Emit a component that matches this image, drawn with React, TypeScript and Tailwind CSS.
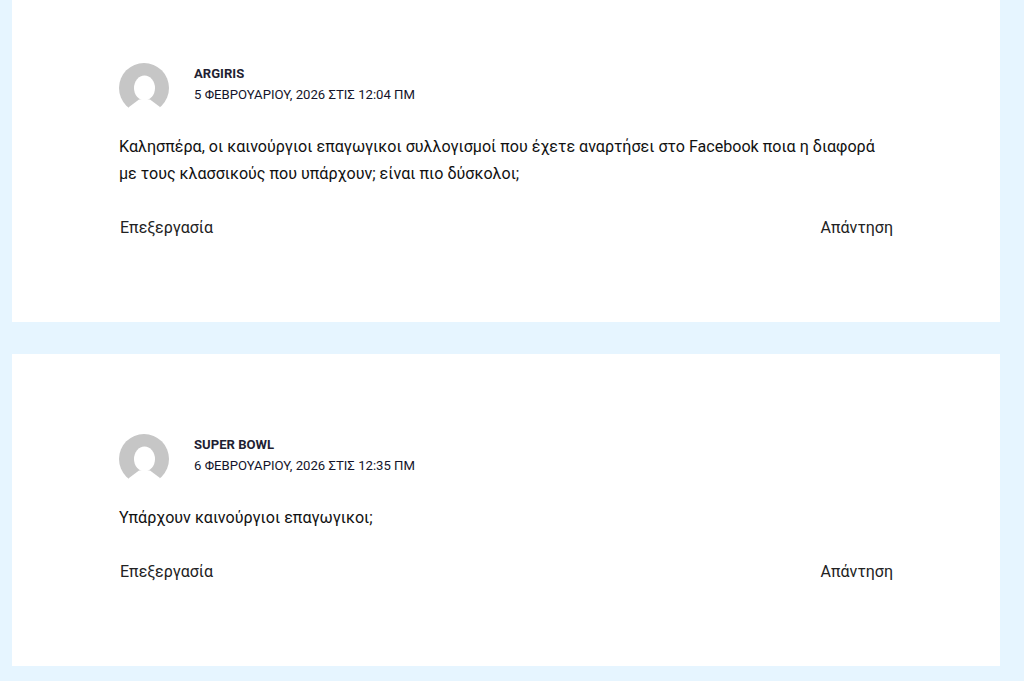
const comments = [
  {
    author: "ARGIRIS",
    date: "5 ΦΕΒΡΟΥΑΡΙΟΥ, 2026 ΣΤΙΣ 12:04 ΠΜ",
    lines: [
      "Καλησπέρα, οι καινούργιοι επαγωγικοι συλλογισμοί που έχετε αναρτήσει στο Facebook ποια η διαφορά",
      "με τους κλασσικούς που υπάρχουν; είναι πιο δύσκολοι;",
    ],
    height: "h-[322px]",
    top: "pt-[63px]",
  },
  {
    author: "SUPER BOWL",
    date: "6 ΦΕΒΡΟΥΑΡΙΟΥ, 2026 ΣΤΙΣ 12:35 ΠΜ",
    lines: ["Υπάρχουν καινούργιοι επαγωγικοι;"],
    height: "h-[312px]",
    top: "pt-[80px]",
  },
];

function Avatar() {
  return (
    <svg width="50" height="50" viewBox="0 0 50 50" className="shrink-0">
      <circle cx="25" cy="25" r="25" fill="#c6c6c6" />
      <ellipse cx="25.5" cy="25" rx="10.5" ry="12.5" fill="#fff" />
      <path d="M10 44 20 36.5h11L41 44l-2 6H8z" fill="#fff" />
    </svg>
  );
}

export default function App() {
  return (
    <div className="h-[681px] overflow-hidden bg-[#e6f5ff] pl-3 pr-6 font-['Roboto',sans-serif] text-[#14142b]">
      <div className="flex flex-col gap-8">
        {comments.map((comment) => (
          <article key={comment.author} className={`${comment.height} ${comment.top} bg-white pl-[107px] pr-[107px]`}>
            <div className="flex items-start gap-[25px]">
              <Avatar />
              <div className="pt-[3px]">
                <div className="text-[13.1px] leading-[16px] font-bold text-[#1f1f33]">{comment.author}</div>
                <div className="mt-[5px] text-[13.15px] leading-[16px]">{comment.date}</div>
              </div>
            </div>
            <div className="mt-[20px] text-[16.08px] leading-[27px] text-[#111]">
              {comment.lines.map((line) => (
                <p key={line}>{line}</p>
              ))}
            </div>
            <div className="mt-[27px] flex justify-between pl-px text-base leading-7 text-[#222]">
              <span>Επεξεργασία</span>
              <span>Απάντηση</span>
            </div>
          </article>
        ))}
      </div>
    </div>
  );
}
